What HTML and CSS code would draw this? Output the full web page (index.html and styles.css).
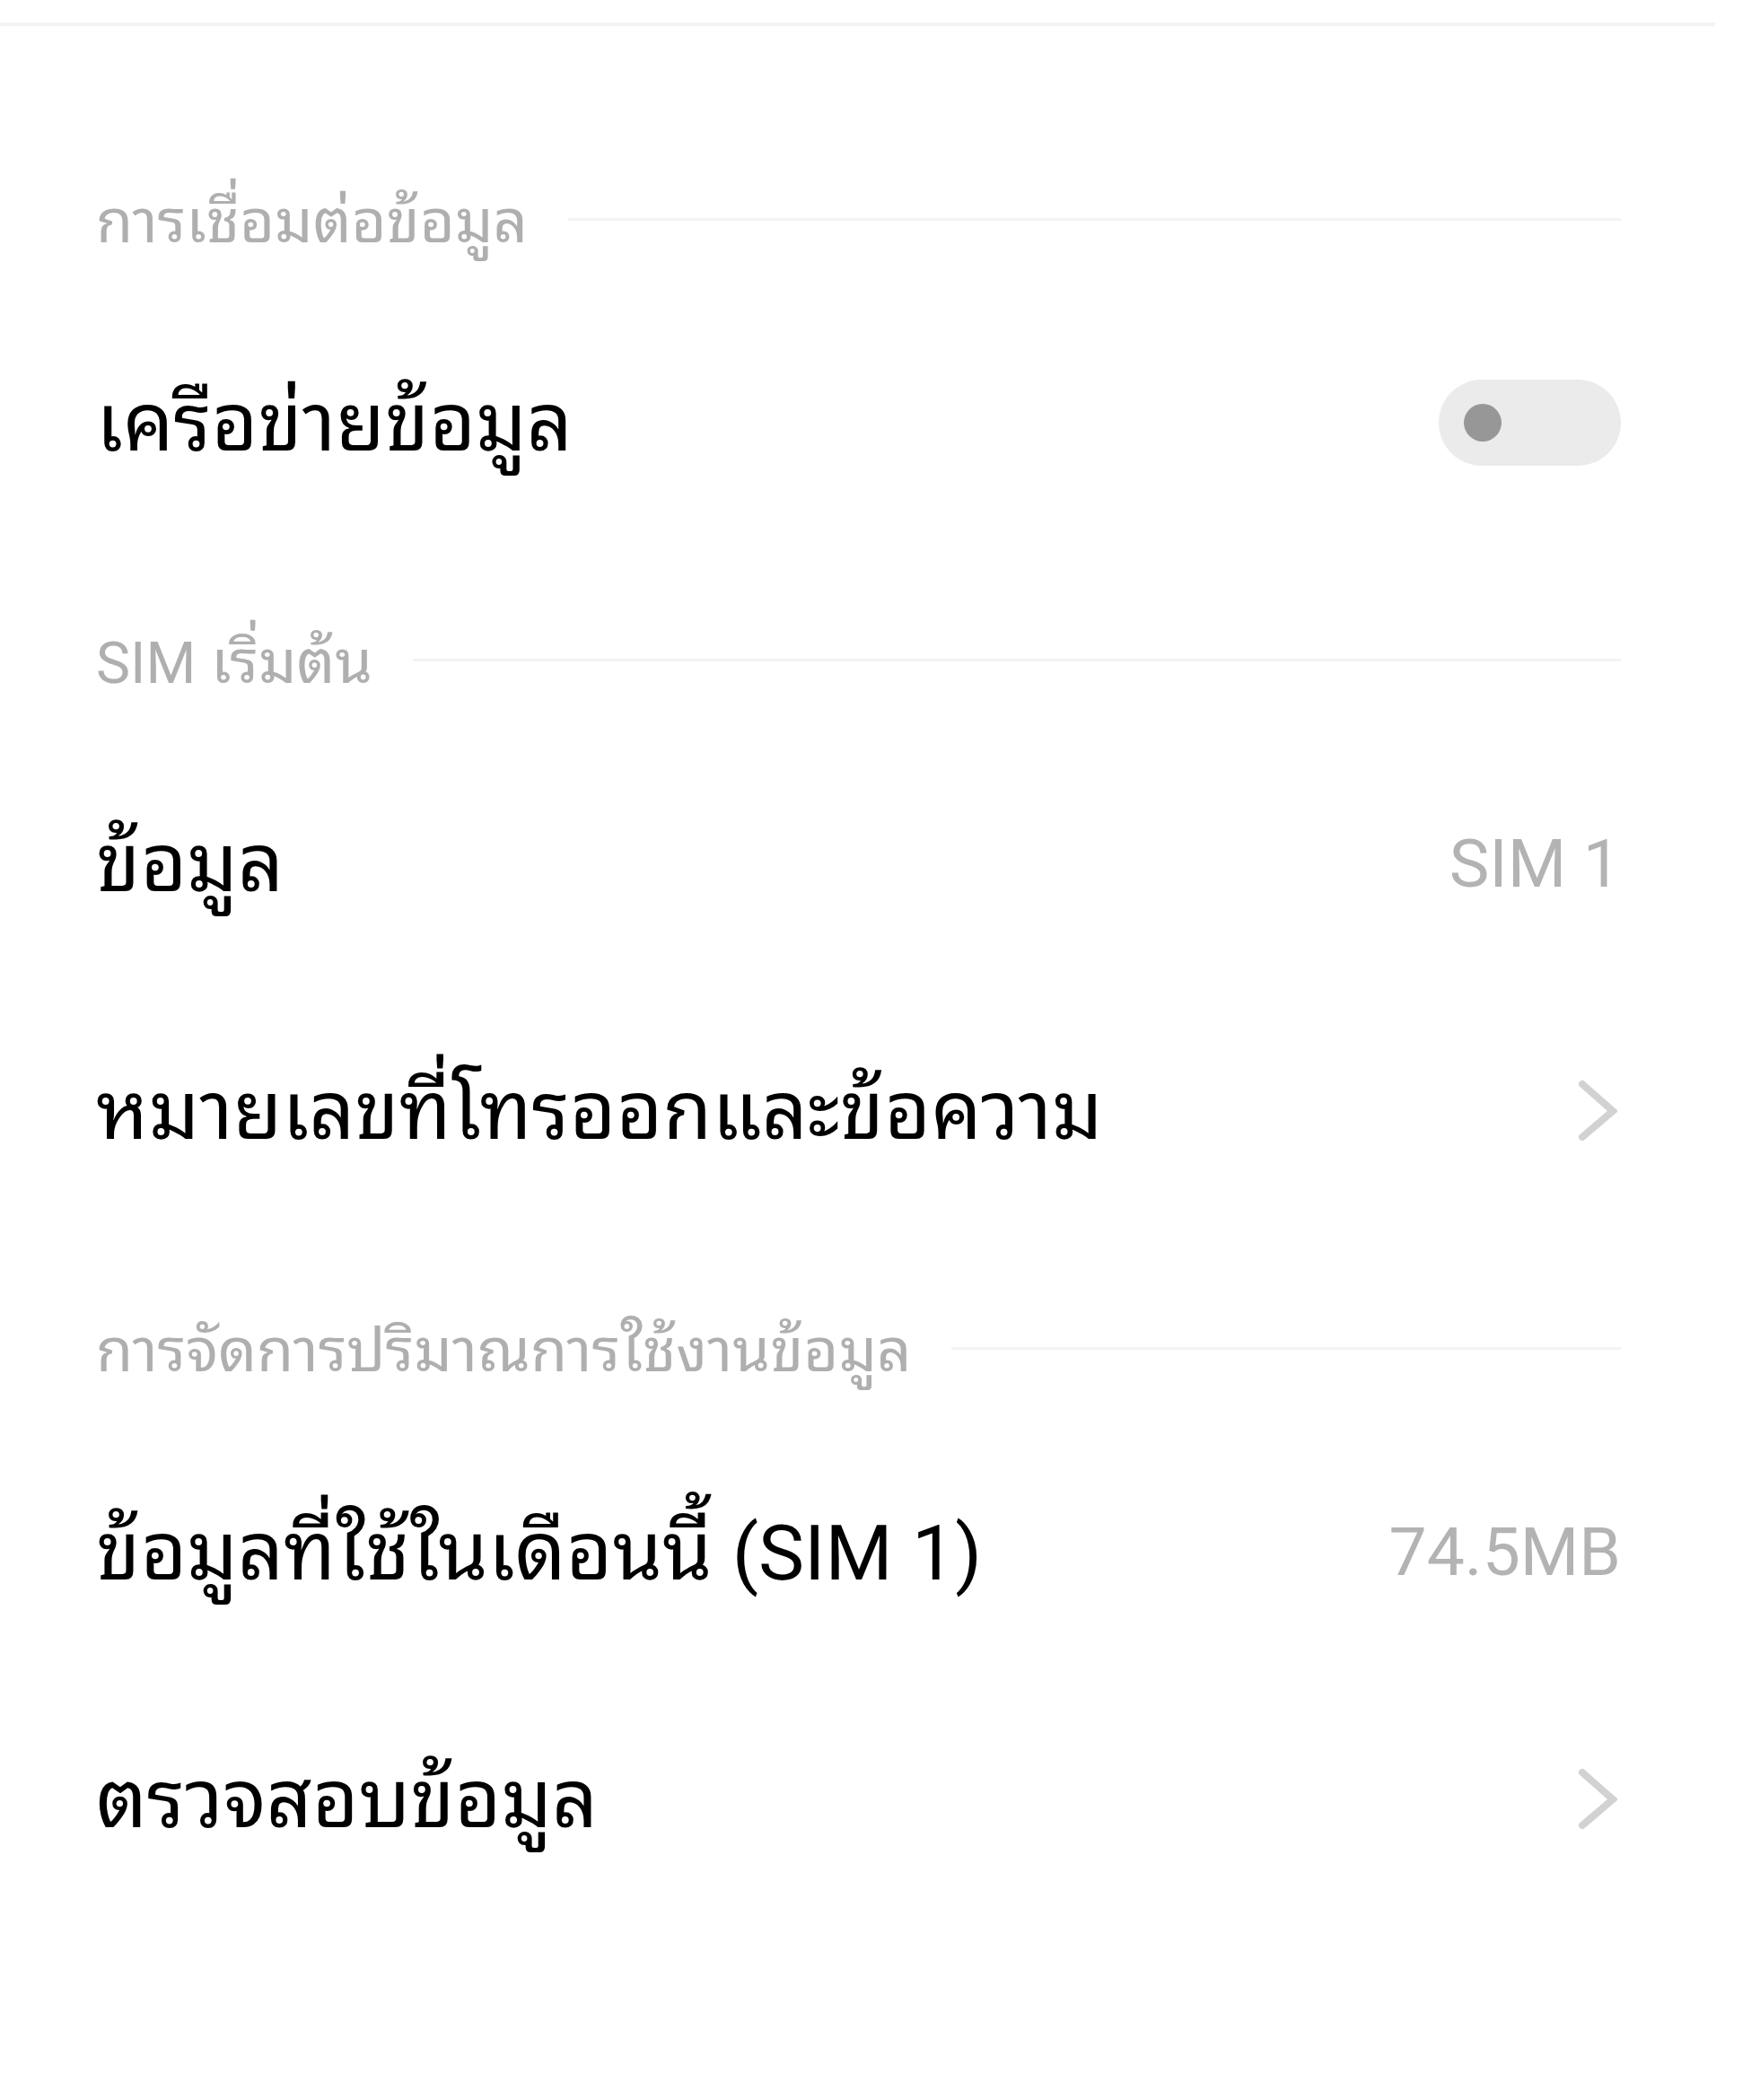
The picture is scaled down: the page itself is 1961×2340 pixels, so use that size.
FILE: index.html
```html
<!DOCTYPE html>
<html lang="th">
<head>
<meta charset="utf-8">
<title>Data</title>
<link rel="stylesheet" href="styles.css">
</head>
<body>
<div class="topline"></div>
<main class="list">
  <div class="section first">
    <span class="section-title">การเชื่อมต่อข้อมูล</span>
    <span class="section-rule"></span>
  </div>
  <div class="item">
    <span class="item-title">เครือข่ายข้อมูล</span>
    <span class="toggle"><span class="knob"></span></span>
  </div>

  <div class="section">
    <span class="section-title"><span class="latin" lang="en">SIM</span> เริ่มต้น</span>
    <span class="section-rule"></span>
  </div>
  <div class="item">
    <span class="item-title">ข้อมูล</span>
    <span class="item-value">SIM 1</span>
  </div>
  <div class="item">
    <span class="item-title">หมายเลขที่โทรออกและข้อความ</span>
    <svg class="chevron" width="44" height="70" viewBox="0 0 44 70"><path d="M5 5 L39 35 L5 64" fill="none" stroke="#d2d2d2" stroke-width="8" stroke-linecap="round" stroke-linejoin="miter"/></svg>
  </div>

  <div class="section">
    <span class="section-title">การจัดการปริมาณการใช้งานข้อมูล</span>
    <span class="section-rule"></span>
  </div>
  <div class="item">
    <span class="item-title">ข้อมูลที่ใช้ในเดือนนี้ <span class="latin" lang="en">(SIM 1)</span></span>
    <span class="item-value">74.5MB</span>
  </div>
  <div class="item">
    <span class="item-title">ตรวจสอบข้อมูล</span>
    <svg class="chevron" width="44" height="70" viewBox="0 0 44 70"><path d="M5 5 L39 35 L5 64" fill="none" stroke="#d2d2d2" stroke-width="8" stroke-linecap="round" stroke-linejoin="miter"/></svg>
  </div>
</main>
</body>
</html>
```

FILE: styles.css
```css
html, body {
  margin: 0;
  padding: 0;
  background: #ffffff;
}

body {
  width: 1961px;
  min-height: 2340px;
  font-family: Roboto, "Noto Sans Thai Looped", "Noto Sans Thai", sans-serif;
}

.topline {
  margin-top: 25px;
  width: 1911px;
  height: 4px;
  background: #f4f4f4;
}

.list {
  padding: 0 155px 0 107px;
}

.section {
  height: 215px;
  box-sizing: border-box;
  padding-top: 43px;
  display: flex;
  align-items: center;
  gap: 45px;
}

.section.first {
  height: 304px;
  padding-top: 132px;
}

.section-title {
  font-size: 67px;
  color: #afafaf;
  white-space: nowrap;
  line-height: 1;
}

.section-title .latin {
  font-size: 64px;
}

.section-rule {
  flex: 1;
  height: 3px;
  margin-bottom: 5px;
  background: #f3f3f3;
}

.item {
  height: 276px;
  display: flex;
  align-items: center;
  justify-content: space-between;
}

.item-title {
  font-size: 89px;
  color: #000000;
  white-space: nowrap;
  line-height: 1;
}

.item-title .latin {
  font-size: 86px;
}

.item-value {
  font-size: 75px;
  color: #b3b3b3;
  line-height: 1;
}

.chevron {
  display: block;
  margin-right: 4px;
}

.toggle {
  position: relative;
  width: 203px;
  height: 96px;
  border-radius: 48px;
  background: #ebebeb;
}

.knob {
  position: absolute;
  left: 28px;
  top: 27px;
  width: 42px;
  height: 42px;
  border-radius: 50%;
  background: #979797;
}
```
